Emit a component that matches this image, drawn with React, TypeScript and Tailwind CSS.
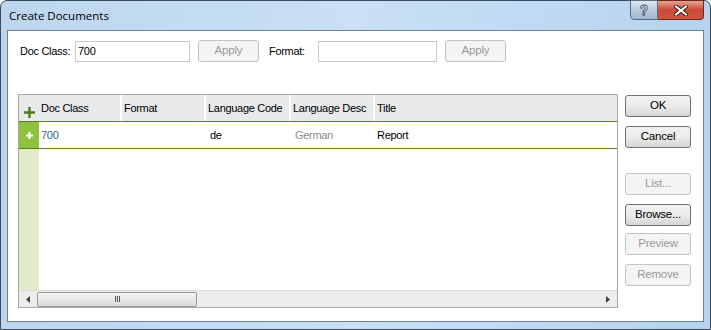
import React from "react";

const font = { fontFamily: '"Liberation Sans", Arial, sans-serif' };

function Btn({ label, disabled, className = "" }: { label: string; disabled?: boolean; className?: string }) {
  return (
    <div
      className={
        "flex h-[22px] items-center justify-center whitespace-nowrap rounded-[3px] border text-[11.5px] tracking-[-0.2px] " +
        (disabled
          ? "border-[#c4c4c4] bg-[#f4f4f4] text-[#9a9a9a]"
          : "border-[#707070] bg-gradient-to-b from-[#f2f2f2] via-[#ebebeb] to-[#d6d6d6] text-black") +
        " " +
        className
      }
    >
      {label}
    </div>
  );
}

function Header({ label, w }: { label: string; w: string }) {
  return (
    <div className={"flex h-full items-center whitespace-nowrap border-r-2 border-white pl-[2px] text-black " + w}>
      {label}
    </div>
  );
}

export default function App() {
  return (
    <div className="h-[330px] w-[711px] bg-white text-[11px] tracking-[-0.3px]" style={font}>
      <div className="flex h-[330px] w-[711px] flex-col rounded-t-[7px] border border-[#3b4a5c] bg-gradient-to-r from-[#bcd6ef] via-[#c9e0f6] to-[#b5d3ef]">
        {/* title bar */}
        <div className="flex h-[29px] items-start justify-between">
          <div
            className="pl-[8px] pt-[6px] text-[11.5px] tracking-normal text-black"
            style={{ fontFamily: '"Open Sans", "Liberation Sans", sans-serif' }}
          >
            Create Documents
          </div>
          <div className="mr-[6px] flex h-[20px] -mt-px">
            <div className="flex w-[28px] items-center justify-center rounded-bl-[4px] border border-[#5a6c84] bg-gradient-to-b from-[#dfe8f2] via-[#b9c9dc] to-[#a4b7ce]">
              <span className="text-[14px] font-bold text-white" style={{ WebkitTextStroke: "0.8px #3c4a5c" }}>?</span>
            </div>
            <div className="flex w-[46px] items-center justify-center rounded-br-[4px] border border-l-0 border-[#6a2a22] bg-gradient-to-b from-[#e8a293] via-[#c74a35] to-[#d2553e]">
              <svg width="14" height="11" viewBox="0 0 14 11">
                <path d="M2 1.5 L12 9.5 M12 1.5 L2 9.5" stroke="#3a1810" strokeWidth="4" strokeLinecap="square" />
                <path d="M2 1.5 L12 9.5 M12 1.5 L2 9.5" stroke="#ffffff" strokeWidth="2" strokeLinecap="square" />
              </svg>
            </div>
          </div>
        </div>

        {/* client area */}
        <div className="mx-[6px] flex h-[292px] flex-col border border-[#6d7f95] bg-white">
          <div className="flex items-center pl-[12px] pt-[9px]">
            <span className="w-[55px] whitespace-nowrap">Doc Class:</span>
            <div className="flex h-[21px] w-[115px] items-center border border-[#c8c8c8] px-[2px]">700</div>
            <Btn label="Apply" disabled className="ml-[8px] w-[61px]" />
            <span className="ml-[10px] w-[49px] whitespace-nowrap">Format:</span>
            <div className="h-[21px] w-[119px] border border-[#c8c8c8]" />
            <Btn label="Apply" disabled className="ml-[8px] w-[61px]" />
          </div>

          <div className="mt-[32px] flex pl-[10px]">
            {/* grid */}
            <div className="flex h-[214px] w-[600px] flex-col border border-[#a8a8a8]">
              <div className="flex h-[26px] shrink-0 items-center bg-[#e8e9eb]">
                <div className="flex h-full w-[20px] items-end justify-center pb-[3px]">
                  <svg width="11" height="11" viewBox="0 0 11 11">
                    <path d="M5.5 0 V11 M0 5.5 H11" stroke="#4d7a16" strokeWidth="2.4" />
                  </svg>
                </div>
                <Header label="Doc Class" w="w-[83px]" />
                <Header label="Format" w="w-[84px]" />
                <Header label="Language Code" w="w-[85px]" />
                <Header label="Language Desc" w="w-[84px]" />
                <div className="flex h-full flex-1 items-center pl-[2px]">Title</div>
              </div>
              <div className="h-px shrink-0 bg-[#5d7f1a]" />
              <div className="flex h-[26px] shrink-0 items-center">
                <div className="flex h-full w-[20px] items-center justify-center bg-[#8dc13f]">
                  <svg width="7" height="7" viewBox="0 0 7 7">
                    <path d="M3.5 0 V7 M0 3.5 H7" stroke="#ffffff" strokeWidth="2" />
                  </svg>
                </div>
                <div className="w-[83px] pl-[2px] text-[#1f6790]">700</div>
                <div className="w-[84px]" />
                <div className="w-[85px] pl-[4px]">de</div>
                <div className="w-[84px] pl-[4px] text-[#8c8c8c]">German</div>
                <div className="flex-1 pl-[2px]">Report</div>
              </div>
              <div className="h-px shrink-0 bg-[#5d7f1a]" />
              <div className="flex flex-1">
                <div className="w-[20px] bg-[#e1ebc9]" />
              </div>
              {/* scrollbar */}
              <div className="flex h-[17px] shrink-0 items-center border-t border-[#dcdcdc] bg-[#ececec]">
                <div className="flex w-[18px] justify-center">
                  <svg width="4" height="7" viewBox="0 0 4 7">
                    <path d="M4 0 L0 3.5 L4 7 Z" fill="#404040" />
                  </svg>
                </div>
                <div className="flex h-[15px] w-[160px] items-center justify-center rounded-[2px] border border-[#9a9a9a] bg-gradient-to-b from-[#f6f6f6] to-[#d9d9d9]">
                  <div className="flex gap-[1px]">
                    <div className="h-[6px] w-px bg-[#555]" />
                    <div className="h-[6px] w-px bg-[#555]" />
                    <div className="h-[6px] w-px bg-[#555]" />
                  </div>
                </div>
                <div className="flex-1" />
                <div className="flex w-[18px] justify-center">
                  <svg width="4" height="7" viewBox="0 0 4 7">
                    <path d="M0 0 L4 3.5 L0 7 Z" fill="#404040" />
                  </svg>
                </div>
              </div>
            </div>

            {/* right buttons */}
            <div className="ml-[7px] flex w-[66px] flex-col pt-[1px]">
              <Btn label="OK" />
              <Btn label="Cancel" className="mt-[9px]" />
              <Btn label="List..." disabled className="mt-[25px]" />
              <Btn label="Browse..." className="mt-[9px]" />
              <Btn label="Preview" disabled className="mt-[7px]" />
              <Btn label="Remove" disabled className="mt-[9px]" />
            </div>
          </div>
        </div>
      </div>
    </div>
  );
}
